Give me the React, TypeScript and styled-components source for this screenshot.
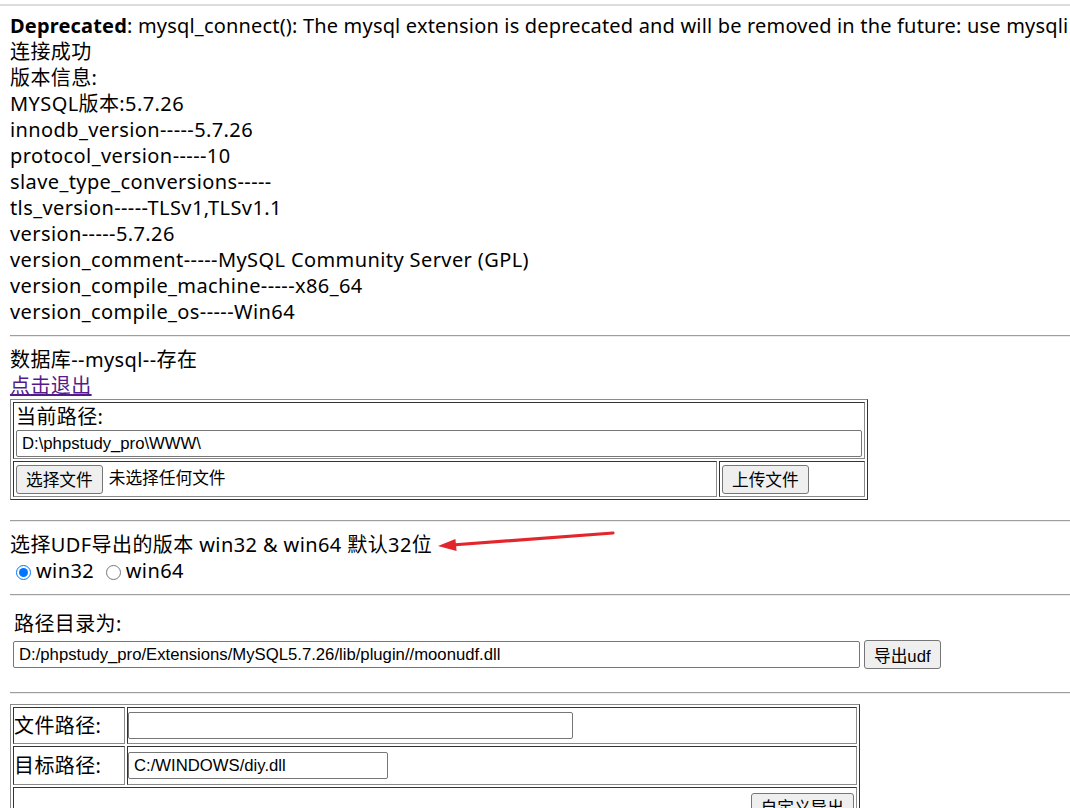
import styled, { createGlobalStyle } from "styled-components";

const Global = createGlobalStyle`
  html, body {
    margin: 0;
    padding: 0;
    background: #fff;
    overflow: hidden;
  }
  body {
    width: 1070px;
    height: 808px;
  }
`;

const TopRule = styled.div`
  height: 2px;
  margin-top: 4px;
  background: #dcdcdc;
`;

const Page = styled.div`
  padding: 7px 0 0 10px;
  font-family: "Noto Sans", "Noto Sans CJK SC", sans-serif;
  font-size: 20px;
  line-height: 26px;
  letter-spacing: 0.4px;
  color: #000;
`;

const Line = styled.div<{ $nowrap?: boolean }>`
  white-space: ${(p) => (p.$nowrap ? "nowrap" : "normal")};
  letter-spacing: ${(p) => (p.$nowrap ? "0.18px" : "inherit")};
  position: relative;
`;

const Rule = styled.hr`
  margin: 10px 0;
  height: 0;
  border: 0;
  border-top: 1px solid #9e9e9e;
  border-bottom: 1px solid #ececec;
`;

const ExitLink = styled.a`
  display: block;
  width: max-content;
  color: #551a8b;
  text-decoration: underline;
`;

const Table = styled.table<{ $width: number; $gapBelow?: number }>`
  width: ${(p) => p.$width}px;
  border-collapse: separate;
  border-spacing: 2px;
  border: 1px solid;
  border-color: #8a8a8a #333 #333 #8a8a8a;
  margin-bottom: ${(p) => p.$gapBelow ?? 0}px;
  font-size: 20px;
  line-height: 26px;
`;

const Cell = styled.td<{ $h?: number; $w?: number; $align?: string; $tight?: boolean }>`
  border: 1px solid;
  border-color: #333 #8a8a8a #8a8a8a #333;
  padding: ${(p) => (p.$tight ? "0 2px 0 0" : "0 2px")};
  height: ${(p) => (p.$h ? `${p.$h}px` : "auto")};
  width: ${(p) => (p.$w ? `${p.$w}px` : "auto")};
  text-align: ${(p) => p.$align ?? "left"};
  vertical-align: middle;
  box-sizing: border-box;
`;

const FieldInput = styled.input<{ $w: number }>`
  display: block;
  box-sizing: border-box;
  width: ${(p) => p.$w}px;
  height: 27px;
  margin: 0;
  padding: 1px 5px;
  border: 1px solid #767676;
  border-radius: 2px;
  font-family: "Liberation Sans", Arial, "Noto Sans CJK SC", sans-serif;
  font-size: 16.7px;
  letter-spacing: 0;
  color: #000;
  background: #fff;
  outline: none;
`;

const Btn = styled.button`
  box-sizing: border-box;
  height: 29px;
  margin: 0;
  padding: 0 9px;
  border: 1px solid #767676;
  border-radius: 3px;
  background: #efefef;
  font-family: "Liberation Sans", Arial, "Noto Sans CJK SC", sans-serif;
  font-size: 16.7px;
  letter-spacing: 0;
  color: #000;
  white-space: nowrap;
`;

const PathLabel = styled.div`
  line-height: 26px;
`;

const FilePick = styled.div`
  display: flex;
  align-items: center;
  gap: 6px;
  font-family: "Liberation Sans", Arial, "Noto Sans CJK SC", sans-serif;
  font-size: 16.7px;
  letter-spacing: 0;
`;

const RadioRow = styled.div`
  display: flex;
  align-items: center;
  height: 26px;
`;

const Radio = styled.input`
  width: 15px;
  height: 15px;
  margin: 2px 5px 0 6px;
  accent-color: #0075ff;
`;

const Arrow = styled.svg`
  position: absolute;
  left: 416px;
  top: -4px;
  overflow: visible;
`;

const ExportBlock = styled.div`
  padding-top: 5px;
  margin-bottom: 23px;
`;

const ExportLabel = styled.div`
  padding-left: 4px;
`;

const ExportRow = styled.div`
  display: flex;
  align-items: center;
  gap: 4px;
  margin-top: 3px;
  padding-left: 3px;
`;

const versions: [string, string][] = [
  ["innodb_version", "5.7.26"],
  ["protocol_version", "10"],
  ["slave_type_conversions", ""],
  ["tls_version", "TLSv1,TLSv1.1"],
  ["version", "5.7.26"],
  ["version_comment", "MySQL Community Server (GPL)"],
  ["version_compile_machine", "x86_64"],
  ["version_compile_os", "Win64"],
];

export default function App() {
  return (
    <>
      <Global />
      <TopRule />
      <Page>
        <Line $nowrap>
          <b>Deprecated</b>: mysql_connect(): The mysql extension is deprecated and will be removed in the future: use mysqli
        </Line>
        <Line>连接成功</Line>
        <Line>版本信息:</Line>
        <Line>MYSQL版本:5.7.26</Line>
        {versions.map(([k, v]) => (
          <Line key={k}>
            {k}-----{v}
          </Line>
        ))}
        <Rule />
        <Line>数据库--mysql--存在</Line>
        <ExitLink href="#">点击退出</ExitLink>

        <Table $width={856} $gapBelow={20}>
          <tbody>
            <tr>
              <Cell colSpan={2} $h={57}>
                <PathLabel>当前路径:</PathLabel>
                <FieldInput $w={846} defaultValue="D:\phpstudy_pro\WWW\" />
              </Cell>
            </tr>
            <tr>
              <Cell $h={36} $w={704}>
                <FilePick>
                  <Btn>选择文件</Btn>
                  <span>未选择任何文件</span>
                </FilePick>
              </Cell>
              <Cell $h={36}>
                <Btn>上传文件</Btn>
              </Cell>
            </tr>
          </tbody>
        </Table>

        <Rule />
        <Line>
          选择UDF导出的版本 win32 &amp; win64 默认32位
          <Arrow width="190" height="24" viewBox="0 0 190 24">
            <path d="M26 17 L187 5" stroke="#e3262b" strokeWidth="3.2" strokeLinecap="round" />
            <path d="M12 18 L30.6 23 L29.4 11 Z" fill="#e3262b" />
          </Arrow>
        </Line>
        <RadioRow>
          <Radio type="radio" name="ver" defaultChecked />
          win32
          <span>&nbsp;</span>
          <Radio type="radio" name="ver" />
          win64
        </RadioRow>
        <Rule />

        <ExportBlock>
          <ExportLabel>路径目录为:</ExportLabel>
          <ExportRow>
            <FieldInput $w={847} defaultValue="D:/phpstudy_pro/Extensions/MySQL5.7.26/lib/plugin//moonudf.dll" />
            <Btn>导出udf</Btn>
          </ExportRow>
        </ExportBlock>

        <Rule />
        <Table $width={850}>
          <tbody>
            <tr>
              <Cell $h={37} $w={112} $tight>文件路径:</Cell>
              <Cell $h={37} $tight>
                <FieldInput $w={445} defaultValue="" />
              </Cell>
            </tr>
            <tr>
              <Cell $h={39} $w={112} $tight>目标路径:</Cell>
              <Cell $h={39} $tight>
                <FieldInput $w={260} defaultValue="C:/WINDOWS/diy.dll" />
              </Cell>
            </tr>
            <tr>
              <Cell colSpan={2} $h={40} $align="right">
                <Btn>自定义导出</Btn>
              </Cell>
            </tr>
          </tbody>
        </Table>
      </Page>
    </>
  );
}
